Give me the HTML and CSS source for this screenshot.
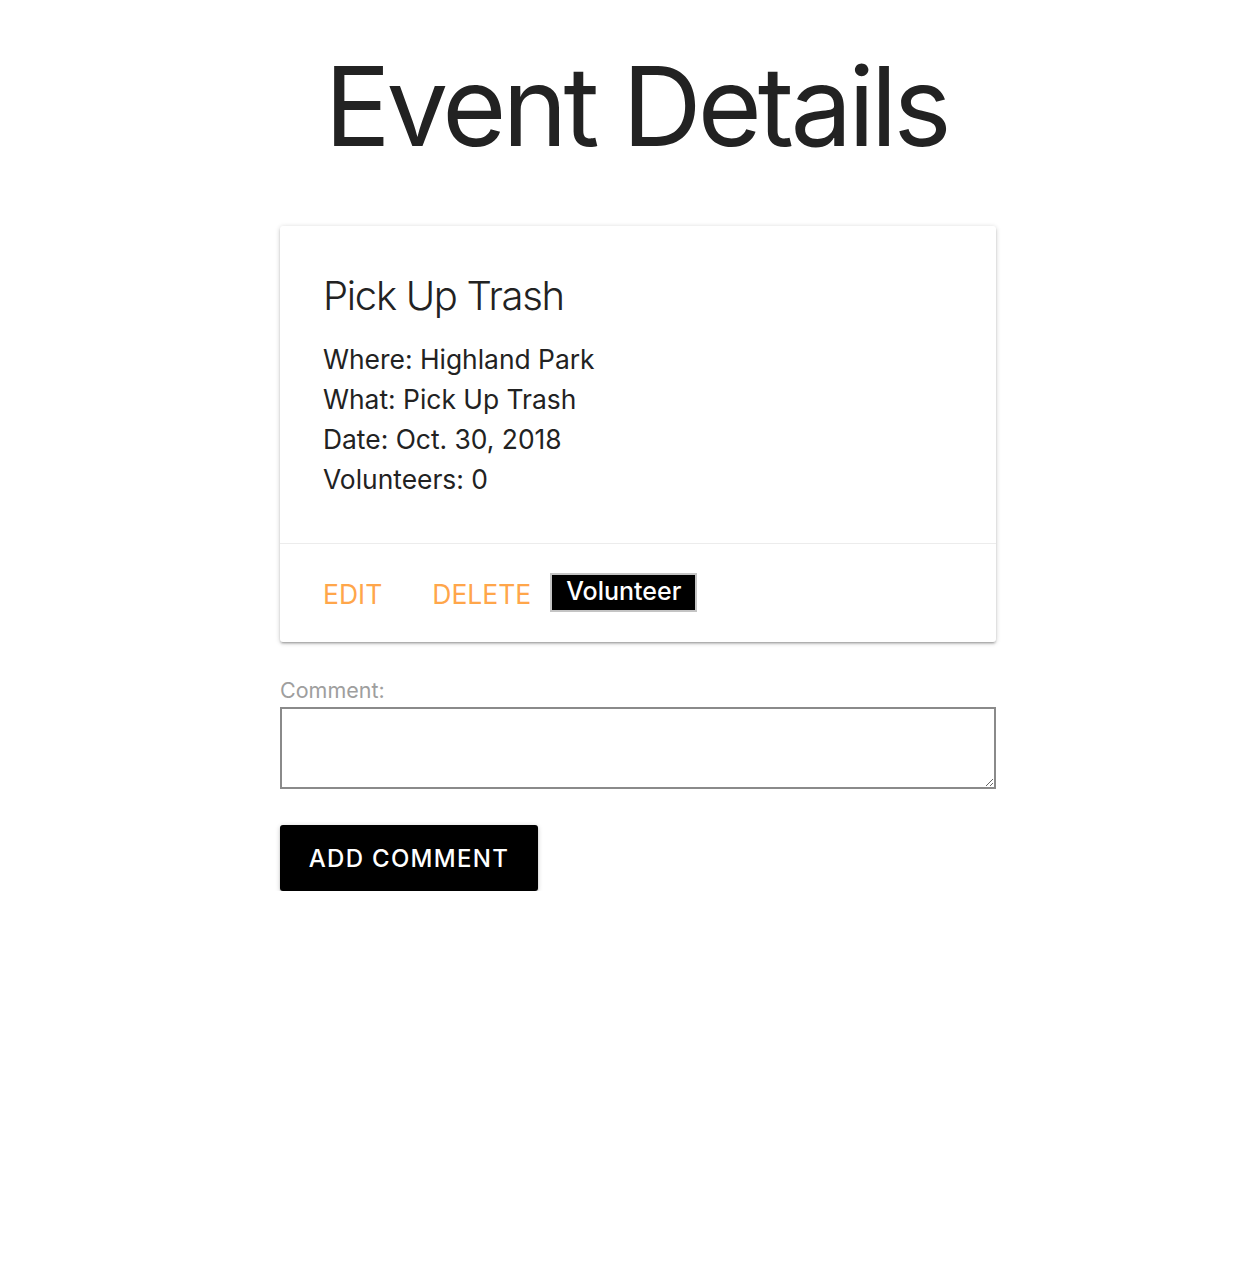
FILE: index.html
```html
<!DOCTYPE html>
<html>
<head>
<meta charset="utf-8">
<link rel="stylesheet" href="styles.css">
</head>
<body>
<main class="page">
  <h1 class="page-title">Event Details</h1>
  <section class="card">
    <div class="card-content">
      <h2 class="card-title">Pick Up Trash</h2>
      <p class="detail">Where: Highland Park</p>
      <p class="detail">What: Pick Up Trash</p>
      <p class="detail">Date: Oct. 30, 2018</p>
      <p class="detail">Volunteers: 0</p>
    </div>
    <div class="card-action">
      <a class="action-link" href="#">EDIT</a>
      <a class="action-link action-delete" href="#">DELETE</a>
      <button class="volunteer-btn" type="button">Volunteer</button>
    </div>
  </section>
  <form class="comment-form">
    <label class="comment-label" for="comment">Comment:</label>
    <textarea id="comment" class="comment-input"></textarea>
    <button class="add-btn" type="button">ADD COMMENT</button>
  </form>
</main>
</body>
</html>
```
FILE: styles.css
```css
html, body {
  margin: 0;
  padding: 0;
  background: #fff;
}
body {
  font-family: Inter, "Liberation Sans", sans-serif;
  color: #222;
  padding-left: 20px;
}
.page {
  width: 716px;
  margin: 0 auto;
  display: flex;
  flex-direction: column;
}
.page-title {
  margin: 46px -40px 0;
  padding-right: 4px;
  font-size: 110px;
  font-weight: 400;
  line-height: 120px;
  text-align: center;
  letter-spacing: -4px;
  color: #222;
}
.card {
  margin-top: 60px;
  background: #fff;
  border-radius: 3px;
  box-shadow: 0 2px 2px 0 rgba(0,0,0,0.14), 0 3px 1px -2px rgba(0,0,0,0.12), 0 1px 5px 0 rgba(0,0,0,0.2);
}
.card-content {
  padding: 44px 44px 44px 43px;
}
.card-title {
  margin: 0 0 17px;
  font-size: 40px;
  font-weight: 300;
  line-height: 52px;
  letter-spacing: -1.3px;
  color: #222;
}
.detail {
  margin: 0;
  font-size: 26.4px;
  line-height: 40px;
  color: #222;
}
.card-action {
  border-top: 1px solid rgba(160,160,160,0.2);
  padding: 0 44px 0 43px;
  display: flex;
  align-items: center;
  height: 99px;
  box-sizing: border-box;
}
.action-link {
  color: #ffa64a;
  text-decoration: none;
  font-size: 26.5px;
  margin-right: 50px;
  line-height: 40px;
  margin-top: 1px;
}
.action-delete {
  margin-right: 19px;
}
.volunteer-btn {
  box-sizing: border-box;
  background: #000;
  color: #fff;
  border: 2px solid #c4c4c4;
  font-family: Inter, "Liberation Sans", sans-serif;
  font-size: 25px;
  font-weight: 500;
  height: 39px;
  width: 147px;
  padding: 0 0 2px;
  line-height: 33px;
  margin: 0 0 2px;
}
.comment-form {
  display: flex;
  flex-direction: column;
  align-items: flex-start;
  margin-top: 36px;
}
.comment-label {
  font-size: 21.5px;
  color: #9e9e9e;
  line-height: 24px;
  margin-bottom: 5px;
}
.comment-input {
  box-sizing: border-box;
  width: 716px;
  height: 82px;
  border: 2px solid #8a8a8a;
  margin: 0;
  padding: 4px;
  font-family: inherit;
}
.add-btn {
  margin-top: 36px;
  background: #000;
  color: #fff;
  border: none;
  border-radius: 3px;
  height: 66px;
  width: 258px;
  font-family: Inter, "Liberation Sans", sans-serif;
  font-size: 24px;
  font-weight: 500;
  letter-spacing: 1.3px;
  box-shadow: 0 2px 2px 0 rgba(0,0,0,0.14), 0 3px 1px -2px rgba(0,0,0,0.12), 0 1px 5px 0 rgba(0,0,0,0.2);
}
```
